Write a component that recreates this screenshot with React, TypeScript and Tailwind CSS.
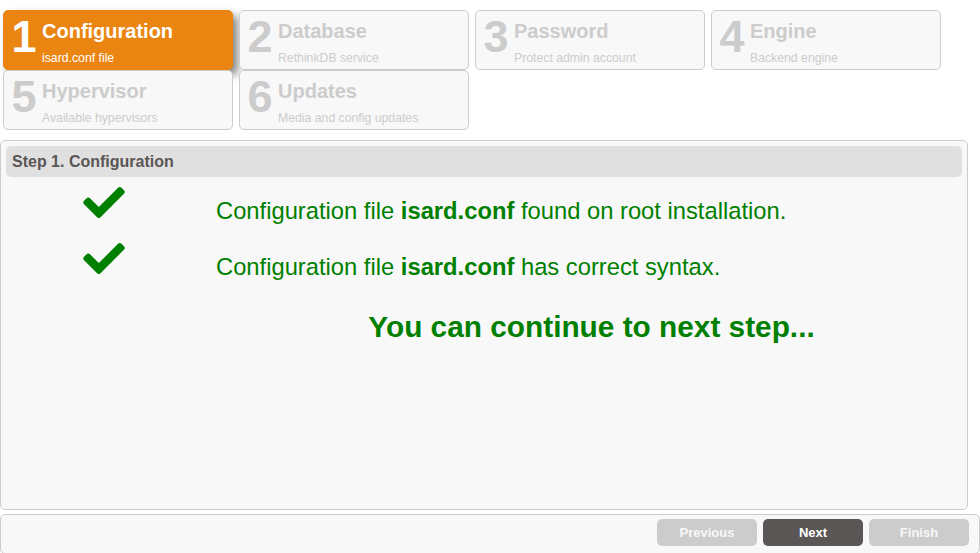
import React from 'react';

const steps = [
  { n: 1, title: 'Configuration', desc: 'isard.conf file' },
  { n: 2, title: 'Database', desc: 'RethinkDB service' },
  { n: 3, title: 'Password', desc: 'Protect admin account' },
  { n: 4, title: 'Engine', desc: 'Backend engine' },
  { n: 5, title: 'Hypervisor', desc: 'Available hypervisors' },
  { n: 6, title: 'Updates', desc: 'Media and config updates' },
];

function Check() {
  return (
    <svg viewBox="0 65 512 382" className="w-[42px] h-[31px]" fill="#008000">
      <path d="M173.898 439.404l-166.4-166.4c-9.997-9.997-9.997-26.206 0-36.204l36.203-36.204c9.997-9.998 26.207-9.998 36.204 0L192 312.69 432.095 72.596c9.997-9.997 26.207-9.997 36.204 0l36.203 36.204c9.997 9.997 9.997 26.206 0 36.204l-294.4 294.401c-9.998 9.997-26.207 9.997-36.204-.001z" />
    </svg>
  );
}

function Step({ n, title, desc, active }: { n: number; title: string; desc: string; active: boolean }) {
  return (
    <a
      className={
        active
          ? 'flex h-[60px] rounded-[5px] border border-[#EA8511] bg-[#EA8511] text-white shadow-[5px_5px_8px_#888]'
          : 'flex h-[60px] rounded-[5px] border border-[#ccc] bg-[#f8f8f8] text-[#ccc]'
      }
    >
      <div className="ml-[5px] w-[30px] text-center text-[45px] font-bold leading-[52px]">{n}</div>
      <div className="ml-[3px] pt-[8px]">
        <div className="text-[20px] font-bold leading-[24px]">{title}</div>
        <div className="mt-[7px] text-[12.25px] leading-[16px]">{desc}</div>
      </div>
    </a>
  );
}

function Button({ label, kind }: { label: string; kind: 'disabled' | 'next' }) {
  return (
    <button
      className={
        kind === 'next'
          ? 'h-[27px] w-[100px] rounded-[5px] bg-[#5A5655] text-[13px] font-bold text-white'
          : 'h-[27px] w-[100px] rounded-[5px] bg-[#ccc] text-[13px] font-bold text-[#f8f8f8]'
      }
    >
      {label}
    </button>
  );
}

export default function App() {
  return (
    <div className="h-[553px] w-[980px] overflow-hidden bg-white font-['Liberation_Sans',Arial,sans-serif]">
      <div className="grid grid-cols-[repeat(4,230px)] gap-x-[6px] pl-[3px] pt-[10px]">
        {steps.map((s) => (
          <Step key={s.n} {...s} active={s.n === 1} />
        ))}
      </div>

      <div className="mt-[10px] h-[370px] w-[968px] rounded-[5px] border border-[#ccc] bg-[#f8f8f8]">
        <div className="mx-[5px] mt-[5px] h-[31px] rounded-[5px] bg-[#E0E0E0] pl-[6px] text-[16px] font-bold leading-[31px] text-[#5A5655]">
          Step 1. Configuration
        </div>

        <div className="mt-[4px] grid grid-cols-[205px_1fr] text-[#008000]">
          <div className="flex h-[56px] justify-center pt-[6px]">
            <Check />
          </div>
          <div className="h-[56px] pl-[10px] pt-[14px] text-[23.75px] leading-[32px]">
            Configuration file <b>isard.conf</b> found on root installation.
          </div>

          <div className="flex h-[56px] justify-center pt-[6px]">
            <Check />
          </div>
          <div className="h-[56px] pl-[10px] pt-[14px] text-[23.75px] leading-[32px]">
            Configuration file <b>isard.conf</b> has correct syntax.
          </div>

          <div />
          <div className="pl-[10px] pt-[16px] text-center text-[29.8px] font-bold leading-[36px]">
            You can continue to next step...
          </div>
        </div>
      </div>

      <div className="mt-[4px] flex h-[40px] w-[980px] justify-end gap-[6px] rounded-[5px] border border-[#ccc] bg-[#f8f8f8] pr-[10px] pt-[4px]">
        <Button label="Previous" kind="disabled" />
        <Button label="Next" kind="next" />
        <Button label="Finish" kind="disabled" />
      </div>
    </div>
  );
}
